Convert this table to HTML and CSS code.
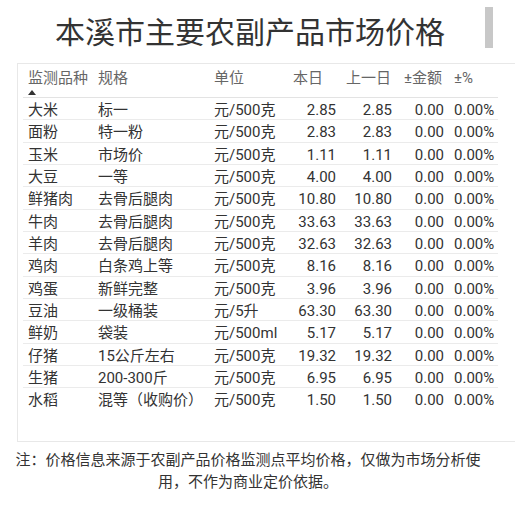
FILE: index.html
```html
<!DOCTYPE html>
<html lang="zh">
<head>
<meta charset="utf-8">
<link rel="stylesheet" href="styles.css">
</head>
<body>
<div class="page">
  <h1 class="title">本溪市主要农副产品市场价格</h1>
  <div class="scrollbar"></div>
  <div class="box">
    <div class="row head">
      <div class="c">监测品种<span class="sort"></span></div>
      <div class="c">规格</div>
      <div class="c">单位</div>
      <div class="c">本日</div>
      <div class="c">上一日</div>
      <div class="c pm">±金额</div>
      <div class="c">±%</div>
    </div>
    <div class="row"><div class="c">大米</div><div class="c">标一</div><div class="c">元/500克</div><div class="c n">2.85</div><div class="c n">2.85</div><div class="c n">0.00</div><div class="c p">0.00%</div></div>
    <div class="row"><div class="c">面粉</div><div class="c">特一粉</div><div class="c">元/500克</div><div class="c n">2.83</div><div class="c n">2.83</div><div class="c n">0.00</div><div class="c p">0.00%</div></div>
    <div class="row"><div class="c">玉米</div><div class="c">市场价</div><div class="c">元/500克</div><div class="c n">1.11</div><div class="c n">1.11</div><div class="c n">0.00</div><div class="c p">0.00%</div></div>
    <div class="row"><div class="c">大豆</div><div class="c">一等</div><div class="c">元/500克</div><div class="c n">4.00</div><div class="c n">4.00</div><div class="c n">0.00</div><div class="c p">0.00%</div></div>
    <div class="row"><div class="c">鲜猪肉</div><div class="c">去骨后腿肉</div><div class="c">元/500克</div><div class="c n">10.80</div><div class="c n">10.80</div><div class="c n">0.00</div><div class="c p">0.00%</div></div>
    <div class="row"><div class="c">牛肉</div><div class="c">去骨后腿肉</div><div class="c">元/500克</div><div class="c n">33.63</div><div class="c n">33.63</div><div class="c n">0.00</div><div class="c p">0.00%</div></div>
    <div class="row"><div class="c">羊肉</div><div class="c">去骨后腿肉</div><div class="c">元/500克</div><div class="c n">32.63</div><div class="c n">32.63</div><div class="c n">0.00</div><div class="c p">0.00%</div></div>
    <div class="row"><div class="c">鸡肉</div><div class="c">白条鸡上等</div><div class="c">元/500克</div><div class="c n">8.16</div><div class="c n">8.16</div><div class="c n">0.00</div><div class="c p">0.00%</div></div>
    <div class="row"><div class="c">鸡蛋</div><div class="c">新鲜完整</div><div class="c">元/500克</div><div class="c n">3.96</div><div class="c n">3.96</div><div class="c n">0.00</div><div class="c p">0.00%</div></div>
    <div class="row"><div class="c">豆油</div><div class="c">一级桶装</div><div class="c">元/5升</div><div class="c n">63.30</div><div class="c n">63.30</div><div class="c n">0.00</div><div class="c p">0.00%</div></div>
    <div class="row"><div class="c">鲜奶</div><div class="c">袋装</div><div class="c">元/500ml</div><div class="c n">5.17</div><div class="c n">5.17</div><div class="c n">0.00</div><div class="c p">0.00%</div></div>
    <div class="row"><div class="c">仔猪</div><div class="c">15公斤左右</div><div class="c">元/500克</div><div class="c n">19.32</div><div class="c n">19.32</div><div class="c n">0.00</div><div class="c p">0.00%</div></div>
    <div class="row"><div class="c">生猪</div><div class="c">200-300斤</div><div class="c">元/500克</div><div class="c n">6.95</div><div class="c n">6.95</div><div class="c n">0.00</div><div class="c p">0.00%</div></div>
    <div class="row last"><div class="c">水稻</div><div class="c">混等（收购价）</div><div class="c">元/500克</div><div class="c n">1.50</div><div class="c n">1.50</div><div class="c n">0.00</div><div class="c p">0.00%</div></div>
  </div>
  <p class="note">注：价格信息来源于农副产品价格监测点平均价格，仅做为市场分析使用，不作为商业定价依据。</p>
</div>
</body>
</html>
```

FILE: styles.css
```css
html, body {
  margin: 0;
  padding: 0;
  background: #ffffff;
}

body {
  font-family: "Segoe UI", Roboto, "Noto Sans CJK SC", sans-serif;
  color: #333333;
  overflow: hidden;
}

.page {
  position: relative;
  width: 515px;
  height: 514px;
}

.title {
  margin: 0;
  padding-top: 10px;
  width: 500px;
  height: 40px;
  font-family: "Noto Sans CJK SC", sans-serif;
  font-weight: 400;
  font-size: 30px;
  line-height: 40px;
  text-align: center;
  color: #333333;
}

.scrollbar {
  position: absolute;
  left: 485px;
  top: 7px;
  width: 8px;
  height: 41px;
  background: #c8c8c8;
}

.box {
  margin-top: 13px;
  margin-left: 17px;
  width: 520px;
  border: 1px solid #e8e8e8;
  border-right: none;
  padding: 0 0 29px 5px;
  box-sizing: border-box;
  height: 379px;
}

.row {
  display: grid;
  grid-template-columns: 70px 116px 79px 53px 56px 52px 49px;
  width: 475px;
  height: 22.33px;
  border-bottom: 1px solid #ebebeb;
  box-sizing: border-box;
  font-size: 15px;
  align-items: start;
}

.row.last {
  border-bottom: none;
}

.row.head {
  height: 34px;
  color: #666666;
  border-bottom: 1px solid #e3e3e3;
}

.c {
  padding: 2px 5px 0;
  white-space: nowrap;
  line-height: 20px;
}

.head .c {
  padding-top: 4px;
}

.head .pm {
  padding-left: 7px;
}

.n {
  text-align: right;
}

.p {
  text-align: left;
}

.sort {
  display: block;
  width: 0;
  height: 0;
  margin-top: 2px;
  border-left: 4px solid transparent;
  border-right: 4px solid transparent;
  border-bottom: 5px solid #333333;
}

.note {
  margin: 6px 0 0 14px;
  width: 468px;
  font-family: "Noto Sans CJK SC", sans-serif;
  font-size: 15px;
  line-height: 22px;
  text-align: center;
  color: #333333;
}
```
